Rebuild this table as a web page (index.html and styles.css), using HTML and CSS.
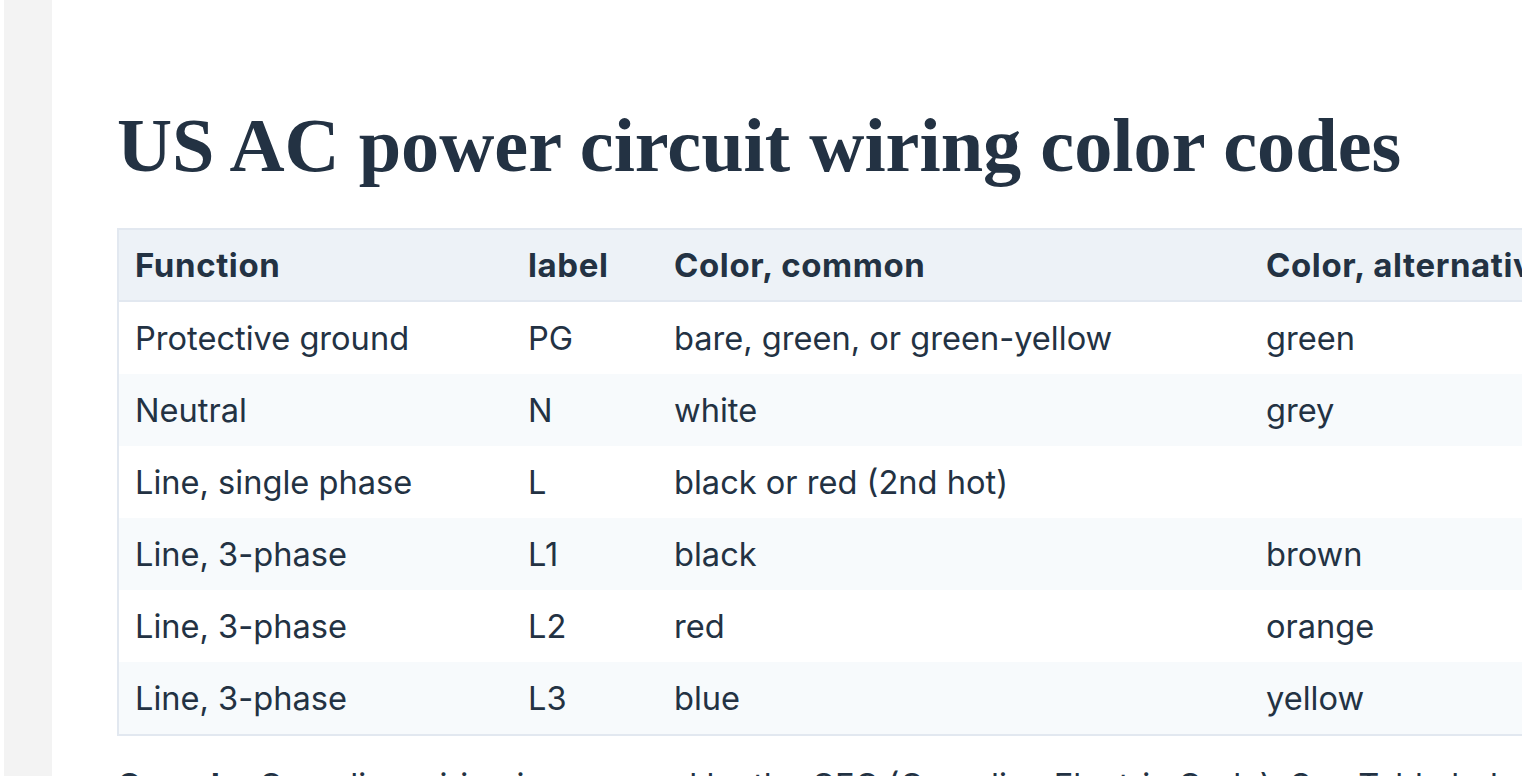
FILE: index.html
```html
<!DOCTYPE html>
<html lang="en">
<head>
<meta charset="utf-8">
<title>US AC power circuit wiring color codes</title>
<link rel="stylesheet" href="styles.css">
</head>
<body>
<div class="page">
  <aside class="rail"></aside>
  <main class="content">
    <h1 class="title">US AC power circuit wiring color codes</h1>
    <table class="codes">
      <colgroup>
        <col class="c1"><col class="c2"><col class="c3"><col class="c4">
      </colgroup>
      <thead>
        <tr><th>Function</th><th>label</th><th>Color, common</th><th>Color, alternative</th></tr>
      </thead>
      <tbody>
        <tr><td>Protective ground</td><td>PG</td><td>bare, green, or green-yellow</td><td>green</td></tr>
        <tr><td>Neutral</td><td>N</td><td>white</td><td>grey</td></tr>
        <tr><td>Line, single phase</td><td>L</td><td>black or red (2nd hot)</td><td></td></tr>
        <tr><td>Line, 3-phase</td><td>L1</td><td>black</td><td>brown</td></tr>
        <tr><td>Line, 3-phase</td><td>L2</td><td>red</td><td>orange</td></tr>
        <tr><td>Line, 3-phase</td><td>L3</td><td>blue</td><td>yellow</td></tr>
      </tbody>
    </table>
    <p class="note"><strong>Canada:</strong> Canadian wiring is governed by the CEC (Canadian Electric Code). See Table below for details.</p>
  </main>
</div>
</body>
</html>
```
FILE: styles.css
```css
html, body {
  margin: 0;
  padding: 0;
  background: #ffffff;
  overflow: hidden;
}
body {
  font-family: Inter, "Noto Sans", sans-serif;
  color: #233243;
}
.page {
  display: flex;
  height: 776px;
  overflow: hidden;
}
.rail {
  flex: 0 0 48px;
  margin-left: 4px;
  background: #f3f3f3;
}
.content {
  flex: 1 1 auto;
  min-width: 0;
  padding: 0 0 0 65px;
  white-space: nowrap;
}
.title {
  font-family: "Liberation Serif", "DejaVu Serif", serif;
  font-weight: 700;
  font-size: 76.3px;
  line-height: 1.2;
  margin: 100px 0 36px;
  color: #233243;
}
.codes {
  border-collapse: collapse;
  table-layout: fixed;
  width: 1550px;
  border: 2px solid #e2e8f0;
  font-size: 32.6px;
}
.c1 { width: 394px; }
.c2 { width: 146px; }
.c3 { width: 592px; }
.c4 { width: 418px; }
.codes th,
.codes td {
  text-align: left;
  padding: 0 16px;
  height: 72px;
  vertical-align: middle;
}
.codes th {
  font-size: 33px;
  font-weight: 700;
  letter-spacing: 0.6px;
  background: #edf2f7;
  border-bottom: 2px solid #e2e8f0;
  height: 70px;
}
.codes tbody tr:nth-child(even) td {
  background: #f7fafc;
}
.note {
  font-size: 32.6px;
  margin: 23px 0 0;
  line-height: 1.6;
}
```
